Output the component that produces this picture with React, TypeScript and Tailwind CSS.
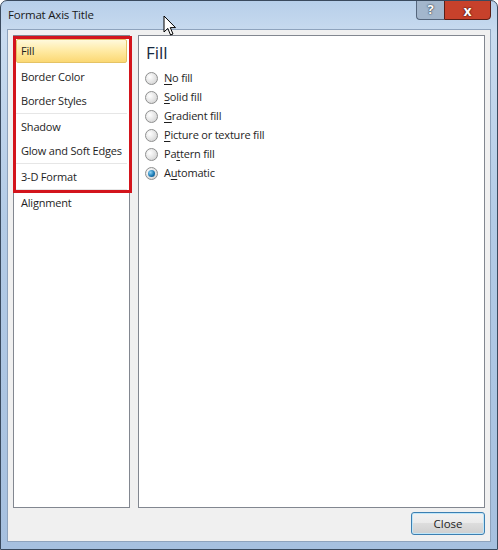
import React from "react";

const navItems = [
  { label: "Fill", selected: true },
  { label: "Border Color" },
  { label: "Border Styles" },
  { sep: true },
  { label: "Shadow" },
  { label: "Glow and Soft Edges" },
  { sep: true },
  { label: "3-D Format" },
  { sep: true },
  { label: "Alignment" },
];

const options: { pre: string; key: string; post: string; checked?: boolean }[] = [
  { pre: "", key: "N", post: "o fill" },
  { pre: "", key: "S", post: "olid fill" },
  { pre: "", key: "G", post: "radient fill" },
  { pre: "", key: "P", post: "icture or texture fill" },
  { pre: "Pa", key: "t", post: "tern fill" },
  { pre: "A", key: "u", post: "tomatic", checked: true },
];

function Radio({ checked }: { checked?: boolean }) {
  return (
    <span className="w-[13px] h-[13px] rounded-full border border-[#8e8f8f] bg-[radial-gradient(circle_at_35%_35%,#ffffff,#e3e3e3_55%,#c9c9c9)] flex items-center justify-center shrink-0">
      {checked && (
        <span className="w-[7px] h-[7px] rounded-full bg-[radial-gradient(circle_at_35%_35%,#8fd3f5,#1c7bb5_55%,#0c3f6e)]" />
      )}
    </span>
  );
}

function Cursor() {
  return (
    <svg className="absolute left-[162px] top-[14px]" width="14" height="22" viewBox="0 0 14 22">
      <path
        d="M1 1 L1 17 L4.8 13.4 L7.6 20 L10 19 L7.3 12.6 L12.5 12.6 Z"
        fill="#ffffff"
        stroke="#000000"
        strokeWidth="1"
        strokeLinejoin="round"
      />
    </svg>
  );
}

export default function App() {
  return (
    <div
      className="relative w-[498px] h-[550px] overflow-hidden rounded-t-[7px] border border-[#3a4a5e] bg-[linear-gradient(180deg,#b7cfea_0%,#c9dbef_6%,#b3cbe6_40%,#a6c0df_100%)] flex flex-col"
      style={{ fontFamily: '"Open Sans", "Noto Sans", "DejaVu Sans", sans-serif' }}
    >
      {/* title bar */}
      <div className="h-[28px] flex items-start shrink-0 relative">
        <div className="pl-[7px] pt-[6px] text-[11.5px] leading-[16px] tracking-[-0.2px] text-[#1a1a1a]">Format Axis Title</div>
        <div className="flex-1" />
        <div className="flex mr-[6px] -mt-px">
          <div className="w-[28px] h-[20px] rounded-bl-[4px] border border-[#55667d] border-r-0 bg-[#a3b6cc] flex items-center justify-center text-[13px] font-bold text-white [text-shadow:0_0_1px_#27313f,0_0_2px_#27313f]">
            ?
          </div>
          <div className="w-[47px] h-[20px] rounded-br-[4px] border border-[#5a1e16] bg-[#c7412b] flex items-center justify-center text-[14px] font-bold text-white [text-shadow:0_0_1px_#3a0c05,0_0_2px_#3a0c05]">
            x
          </div>
        </div>
        <Cursor />
      </div>

      {/* client area */}
      <div className="flex-1 mx-[6px] mb-[7px] border border-[#8ea3bd] bg-[#f0f0f0] flex flex-col px-[5px] pt-[5px] pb-[6px]">
        <div className="flex-1 flex gap-[8px]">
          {/* left nav */}
          <div className="w-[117px] border border-[#828790] bg-white px-[2px] pt-[3px] flex flex-col text-[11px] tracking-[-0.2px] text-[#1e1e1e]">
            {navItems.map((it, i) =>
              it.sep ? (
                <div key={i} className="h-[2px] border-t border-[#e6e6e6]" />
              ) : it.selected ? (
                <div
                  key={i}
                  className="h-[24px] mb-[2px] rounded-[2px] border border-[#e5c365] bg-[linear-gradient(180deg,#fff9dc_0%,#ffeaa3_50%,#fbd873_100%)] flex items-center pl-[4px]"
                >
                  {it.label}
                </div>
              ) : (
                <div key={i} className="h-[24px] flex items-center pl-[5px] whitespace-nowrap">
                  {it.label}
                </div>
              )
            )}
          </div>

          {/* right pane */}
          <div className="flex-1 border border-[#828790] bg-white pl-[6px] pt-[5px]">
            <div className="text-[17px] leading-[23px] text-[#172a42] mb-[5px] pl-[1px]">Fill</div>
            <div className="flex flex-col text-[11px] tracking-[-0.2px] text-[#1e1e1e]">
              {options.map((o) => (
                <div key={o.post} className="h-[19px] flex items-center gap-[6px]">
                  <Radio checked={o.checked} />
                  <span>
                    {o.pre}
                    <span className="underline underline-offset-2">{o.key}</span>
                    {o.post}
                  </span>
                </div>
              ))}
            </div>
          </div>
        </div>

        {/* buttons */}
        <div className="flex justify-end pt-[4px]">
          <button className="w-[74px] h-[23px] rounded-[3px] border border-[#3c7fb1] bg-[linear-gradient(180deg,#f2f2f2_0%,#ebebeb_45%,#dddddd_50%,#cfcfcf_100%)] shadow-[inset_0_0_0_1px_#bfe6f9] text-[11.5px] text-[#1e1e1e] flex items-center justify-center">
            Close
          </button>
        </div>
      </div>

      {/* annotation */}
      <div className="absolute left-[12px] top-[35px] w-[119px] h-[157px] border-[3px] border-[#d3141c] pointer-events-none" />
    </div>
  );
}
